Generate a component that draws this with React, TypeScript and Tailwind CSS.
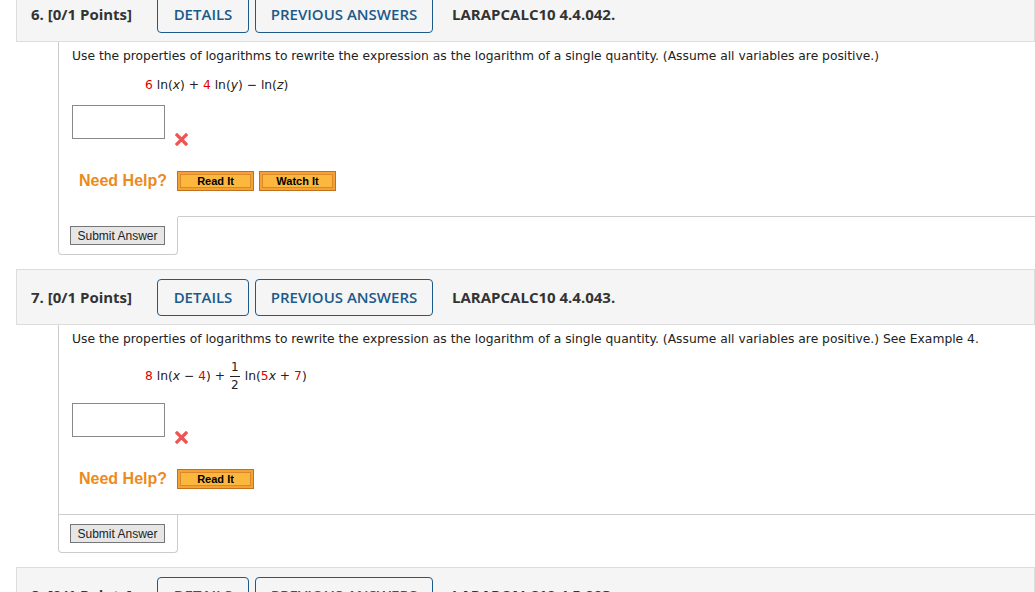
import type { ReactNode } from "react";

const headFont = { fontFamily: '"Open Sans", "DejaVu Sans", sans-serif' };
const bodyFont = { fontFamily: '"DejaVu Sans", Verdana, sans-serif' };
const arial = { fontFamily: '"Liberation Sans", Arial, sans-serif' };

function Header({ num, code }: { num: number; code: string }) {
  return (
    <div
      className="ml-4 h-[56px] bg-[#f5f5f5] border border-[#dddddd] flex items-center pl-[14px] text-[15px]"
      style={headFont}
    >
      <span className="font-bold text-[#333] w-[126px]">{num}. [0/1 Points]</span>
      <button className="h-[37px] w-[92px] border border-[#1b5a8a] rounded-[4px] text-[#1b5a8a] font-semibold">
        DETAILS
      </button>
      <button className="ml-[6px] h-[37px] w-[178px] border border-[#1b5a8a] rounded-[4px] text-[#1b5a8a] font-semibold">
        PREVIOUS ANSWERS
      </button>
      <span className="ml-[19px] font-bold text-[#333]">{code}</span>
    </div>
  );
}

function RedX() {
  return (
    <svg width="13" height="13" viewBox="0 0 13 13" className="ml-[10px] mt-[28px]">
      <path d="M2 2 L11 11 M11 2 L2 11" stroke="#ee5454" strokeWidth="3.2" strokeLinecap="square" />
    </svg>
  );
}

function OrangeBtn({ label }: { label: string }) {
  return (
    <span className="inline-flex w-[77px] h-[20px] border border-[#c2711f] bg-[#f6a232] p-[2px]">
      <span
        className="flex-1 flex items-center justify-center border border-[#d9892c] bg-[#fcb73f] text-[11px] font-bold text-black"
        style={arial}
      >
        {label}
      </span>
    </span>
  );
}

function Red({ children }: { children: ReactNode }) {
  return <span className="text-[#e00000]">{children}</span>;
}

function Question({
  num,
  code,
  text,
  formula,
  helpers,
  fullLine,
  formulaCls,
  helpCls,
}: {
  num: number;
  code: string;
  text: string;
  formula: ReactNode;
  helpers: string[];
  fullLine: boolean;
  formulaCls: string;
  helpCls: string;
}) {
  return (
    <div>
      <Header num={num} code={code} />
      <div className="ml-[58px] border-l border-[#cccccc]">
        <div className="pl-[13px] pt-[5px] text-[12.3px] text-[#222]" style={bodyFont}>
          <p className="leading-[18px]">{text}</p>
          <div className={`pl-[73px] flex items-center ${formulaCls}`}>{formula}</div>
          <div className="flex mt-[8px]">
            <div className="w-[93px] h-[34px] border border-[#888] bg-white" />
            <RedX />
          </div>
          <div className={`flex items-center pl-[7px] ${helpCls}`}>
            <span className="text-[16px] leading-[24px] font-bold text-[#ec8a1c] mr-[10px]" style={arial}>
              Need Help?
            </span>
            <div className="flex gap-[5px]">
              {helpers.map((h) => (
                <OrangeBtn key={h} label={h} />
              ))}
            </div>
          </div>
        </div>
        <div className="flex mt-[23px]">
          <div className={`w-[119px] ${fullLine ? "border-t border-[#cccccc]" : ""}`} />
          <div className="flex-1 border-t border-[#cccccc]" />
        </div>
      </div>
      <div className="ml-[58px] w-[120px] h-[38px] border-l border-r border-b rounded-b-[4px] border-[#cccccc] flex items-center pl-[11px]">
        <button
          className="h-[19px] w-[95px] border border-[#767676] bg-[#e6e6e6] text-[12px] text-[#222] leading-none"
          style={arial}
        >
          Submit Answer
        </button>
      </div>
    </div>
  );
}

export default function App() {
  return (
    <div className="w-[1035px] h-[592px] overflow-hidden bg-white">
      <div className="-mt-[14px] flex flex-col gap-[14px]">
        <Question
          num={6}
          code="LARAPCALC10 4.4.042."
          text="Use the properties of logarithms to rewrite the expression as the logarithm of a single quantity. (Assume all variables are positive.)"
          formulaCls="mt-[8px] h-[24px]"
          helpCls="mt-[23px]"
          formula={
            <span className="whitespace-pre">
              <Red>6</Red> ln(<i>x</i>) + <Red>4</Red> ln(<i>y</i>) − ln(<i>z</i>)
            </span>
          }
          helpers={["Read It", "Watch It"]}
          fullLine={false}
        />
        <Question
          num={7}
          code="LARAPCALC10 4.4.043."
          text="Use the properties of logarithms to rewrite the expression as the logarithm of a single quantity. (Assume all variables are positive.) See Example 4."
          formulaCls="mt-[9px] h-[38px]"
          helpCls="mt-[23px]"
          formula={
            <span className="flex items-center whitespace-pre">
              <Red>8</Red>
              {" ln("}
              <i>x</i>
              {" − "}
              <Red>4</Red>
              {") + "}
              <span className="inline-flex flex-col items-center text-[12px] leading-[17px] mx-[1px]">
                <span>1</span>
                <span className="border-t border-[#222] w-[10px]" />
                <span>2</span>
              </span>
              {" ln("}
              <Red>5</Red>
              <i>x</i>
              {" + "}
              <Red>7</Red>
              {")"}
            </span>
          }
          helpers={["Read It"]}
          fullLine={true}
        />
        <Header num={8} code="LARAPCALC10 4.5.003." />
      </div>
    </div>
  );
}
